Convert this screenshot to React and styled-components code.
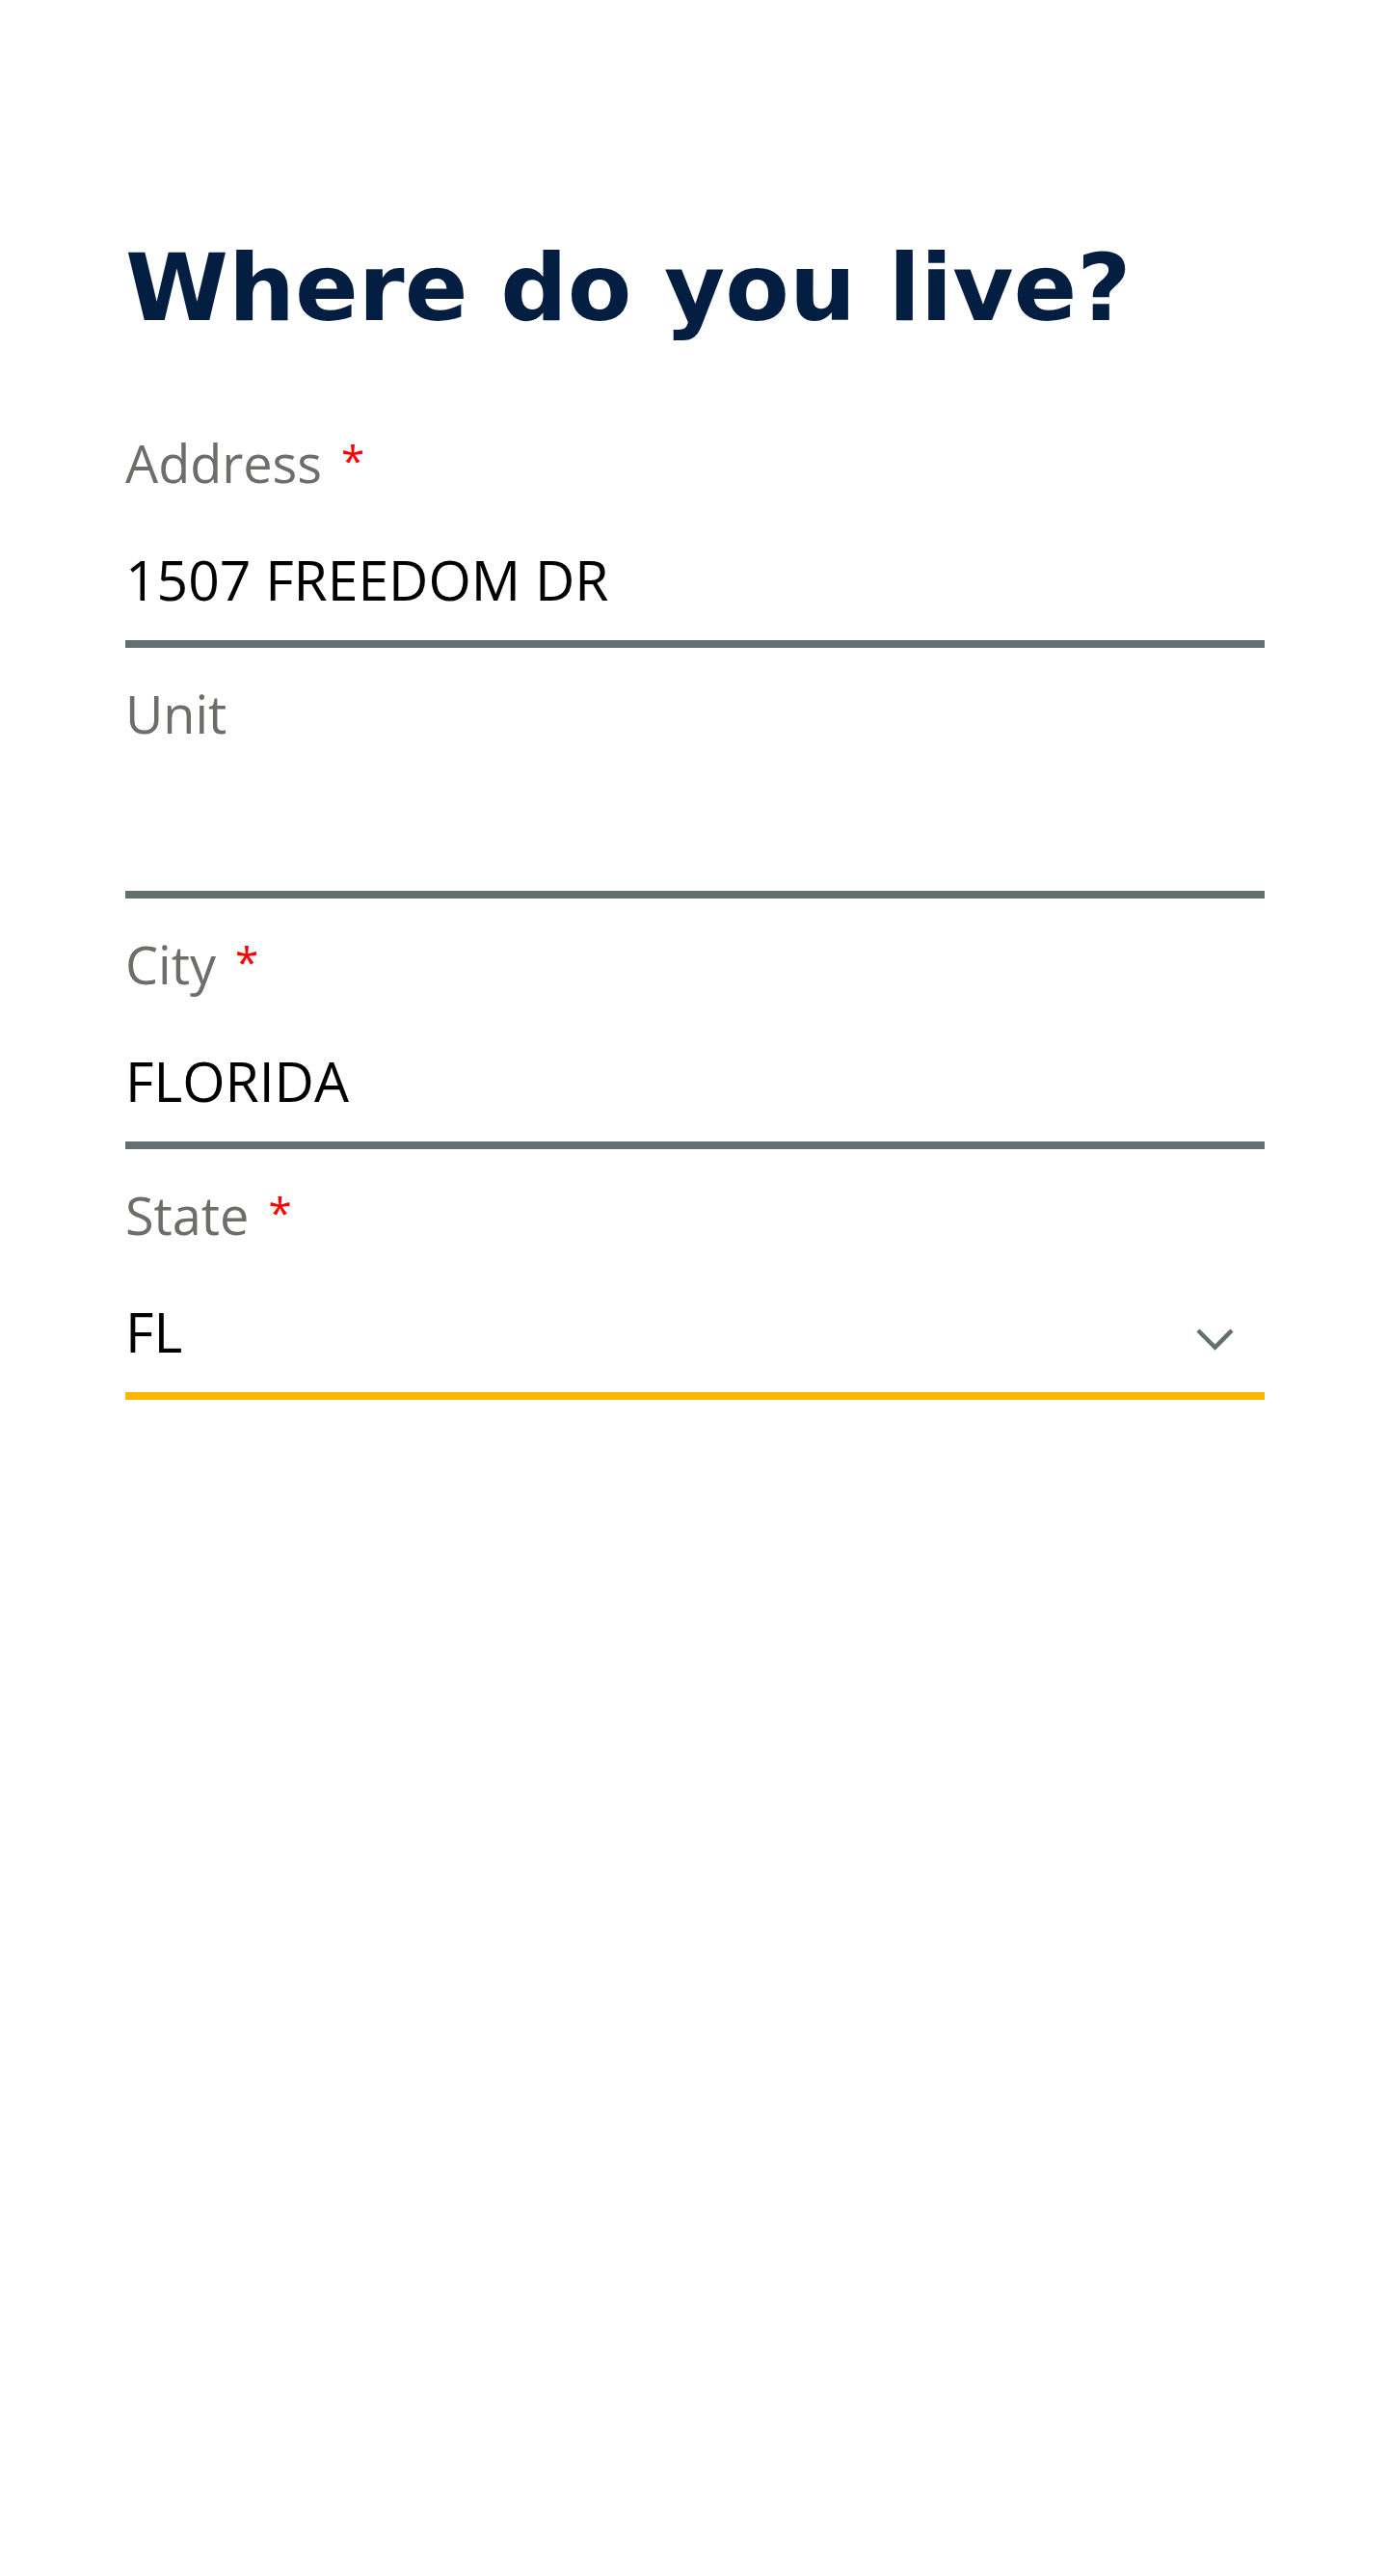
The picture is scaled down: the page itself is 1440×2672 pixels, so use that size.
import React from "react";
import styled, { createGlobalStyle } from "styled-components";

const COLORS = {
  NAVY: "#041e42",
  LABEL: "#6d6e69",
  LINE: "#646f70",
  FOCUS: "#ffb600",
  REQUIRED: "#ff0000",
};

const GlobalStyle = createGlobalStyle`
  html, body {
    margin: 0;
    padding: 0;
    background: #ffffff;
  }
  * {
    box-sizing: border-box;
  }
`;

const Page = styled.main`
  min-height: 2672px;
  padding: 239px 128px 0 130px;
  font-family: "Open Sans", "Noto Sans", sans-serif;
`;

const Title = styled.h1`
  margin: 0 0 86px;
  font-family: "DejaVu Sans", Inter, sans-serif;
  font-size: 97px;
  line-height: 120px;
  font-weight: 700;
  color: ${COLORS.NAVY};
`;

const Form = styled.form`
  display: flex;
  flex-direction: column;
  gap: 33px;
`;

const Field = styled.div`
  display: flex;
  flex-direction: column;
`;

const Label = styled.label`
  display: block;
  height: 70px;
  margin-bottom: 46px;
  font-size: 54px;
  line-height: 70px;
  color: ${COLORS.LABEL};
`;

const Required = styled.span`
  position: relative;
  top: -7px;
  margin-left: 20px;
  font-size: 44px;
  line-height: 1;
  color: ${COLORS.REQUIRED};
`;

const Control = styled.div`
  display: flex;
  align-items: center;
  padding-bottom: 23px;
  border-bottom: 8px solid ${(p) => (p.$focused ? COLORS.FOCUS : COLORS.LINE)};
`;

const Input = styled.input`
  flex: 1;
  min-width: 0;
  height: 80px;
  padding: 0;
  border: 0;
  outline: none;
  background: transparent;
  font-family: "Open Sans", "Noto Sans", sans-serif;
  font-size: 57px;
  line-height: 80px;
  color: #000000;
`;

const SelectValue = styled.div`
  flex: 1;
  font-size: 57px;
  line-height: 80px;
  color: #000000;
`;

const Chevron = styled.svg`
  width: 39px;
  height: 23px;
  margin: 16px 32px 0 0;
  flex-shrink: 0;
`;

function TextField({ id, label, value, required }) {
  return (
    <Field>
      <Label htmlFor={id}>
        {label}
        {required && <Required>*</Required>}
      </Label>
      <Control>
        <Input id={id} defaultValue={value} readOnly />
      </Control>
    </Field>
  );
}

function SelectField({ label, value, required }) {
  return (
    <Field>
      <Label>
        {label}
        {required && <Required>*</Required>}
      </Label>
      <Control $focused>
        <SelectValue>{value}</SelectValue>
        <Chevron viewBox="0 0 39 23" fill="none">
          <path
            d="M2 2 L19.5 19.5 L37 2"
            stroke={COLORS.LINE}
            strokeWidth="4.5"
          />
        </Chevron>
      </Control>
    </Field>
  );
}

export default function App() {
  return (
    <>
      <GlobalStyle />
      <Page>
        <Title>Where do you live?</Title>
        <Form onSubmit={(e) => e.preventDefault()}>
          <TextField id="address" label="Address" value="1507 FREEDOM DR" required />
          <TextField id="unit" label="Unit" value="" />
          <TextField id="city" label="City" value="FLORIDA" required />
          <SelectField label="State" value="FL" required />
        </Form>
      </Page>
    </>
  );
}
